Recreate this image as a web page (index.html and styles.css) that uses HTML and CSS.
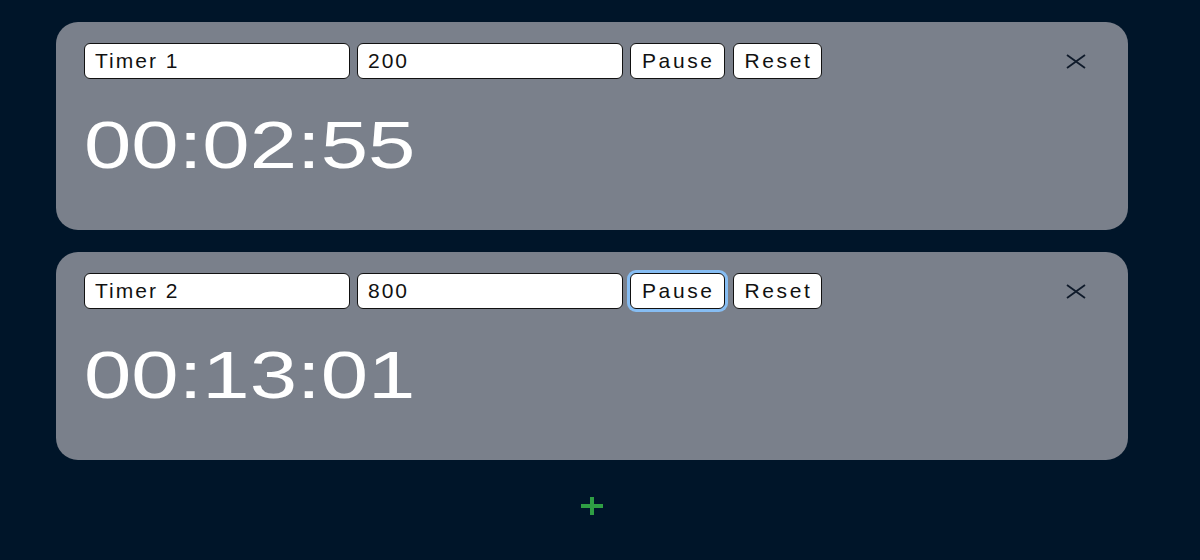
FILE: index.html
```html
<!DOCTYPE html>
<html lang="en">
<head>
    <meta charset="UTF-8">
    <meta name="viewport" content="width=device-width, initial-scale=1.0">
    <title>Timers</title>
    <link rel="stylesheet" href="styles.css">
</head>
<body>

    <div class="timers">
        <!-- Timer 1 -->
        <div class="card">
            <div class="controls">
                <input class="field" type="text" value="Timer 1">
                <input class="field" type="text" value="200">
                <button class="btn">Pause</button>
                <button class="btn">Reset</button>
                <button class="close-btn" aria-label="Remove">
                    <svg width="20" height="15" viewBox="0 0 20 15"><path d="M1 1 L19 14 M19 1 L1 14" stroke="#0f1a2a" stroke-width="1.8" fill="none"/></svg>
                </button>
            </div>
            <div class="display">00:02:55</div>
        </div>

        <!-- Timer 2 -->
        <div class="card">
            <div class="controls">
                <input class="field" type="text" value="Timer 2">
                <input class="field" type="text" value="800">
                <button class="btn focused">Pause</button>
                <button class="btn">Reset</button>
                <button class="close-btn" aria-label="Remove">
                    <svg width="20" height="15" viewBox="0 0 20 15"><path d="M1 1 L19 14 M19 1 L1 14" stroke="#0f1a2a" stroke-width="1.8" fill="none"/></svg>
                </button>
            </div>
            <div class="display">00:13:01</div>
        </div>

        <button class="add-btn" aria-label="Add timer">
            <svg width="22" height="18" viewBox="0 0 22 18"><path d="M0 9 H22 M11 0 V18" stroke="#2f9e44" stroke-width="4" fill="none"/></svg>
        </button>
    </div>

</body>
</html>
```

FILE: styles.css
```css
* {
    margin: 0;
    padding: 0;
    box-sizing: border-box;
    font-family: "Liberation Sans", Arial, sans-serif;
}

body {
    background-color: #001529;
    height: 100vh;
    overflow: hidden;
}

.timers {
    width: 1072px;
    margin-left: 56px;
    padding-top: 22px;
    display: flex;
    flex-direction: column;
    gap: 22px;
}

.card {
    background-color: #7a808b;
    border-radius: 22px;
    padding: 21px 28px 52px;
}

.controls {
    display: flex;
    align-items: center;
    gap: 7px;
}

.field {
    width: 266px;
    height: 36px;
    background: white;
    border: 1.7px solid #111;
    border-radius: 6px;
    padding: 0 10px;
    font-size: 21px;
    letter-spacing: 2px;
    color: #111;
    outline: none;
}

.btn {
    height: 36px;
    background: white;
    border: 1.7px solid #111;
    border-radius: 6px;
    padding: 0 9px 0 11px;
    font-size: 21px;
    letter-spacing: 2.6px;
    color: #111;
    cursor: pointer;
}

.btn + .btn {
    margin-left: 1px;
}

.btn.focused {
    box-shadow: 0 0 0 3px #86bdf3;
}

.close-btn {
    margin-left: auto;
    margin-right: 14px;
    background: none;
    border: none;
    cursor: pointer;
    display: flex;
}

.display {
    margin-top: 33px;
    font-size: 66px;
    line-height: 66px;
    color: white;
    display: inline-block;
    transform: scaleX(1.29);
    transform-origin: left;
}

.add-btn {
    align-self: center;
    margin-top: 15px;
    background: none;
    border: none;
    cursor: pointer;
    display: flex;
}
```
